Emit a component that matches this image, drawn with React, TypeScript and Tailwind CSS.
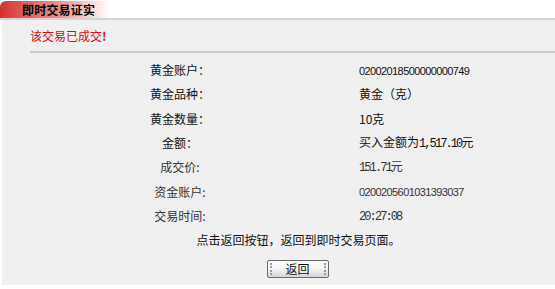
import React from 'react';

const rows: { label: string; value: string; kind: 'cjk' | 'num' | 'mono'; bold?: boolean }[] = [
  { label: '黄金账户：', value: '02002018500000000749', kind: 'num', bold: true },
  { label: '黄金品种：', value: '黄金（克）', kind: 'cjk', bold: true },
  { label: '黄金数量：', value: '10克', kind: 'cjk', bold: true },
  { label: '金额：', value: '买入金额为1,517.10元', kind: 'mono', bold: true },
  { label: '成交价:', value: '151.71元', kind: 'mono' },
  { label: '资金账户:', value: '0200205601031393037', kind: 'num' },
  { label: '交易时间:', value: '20:27:08', kind: 'mono' },
];

const cjk = "font-['Noto_Sans_CJK_SC',sans-serif]";

const Value = ({ text, kind }: { text: string; kind: string }) => {
  if (kind === 'num') {
    return <span className="font-['Liberation_Sans',sans-serif] text-[11px] tracking-[-0.6px]">{text}</span>;
  }
  if (kind === 'mono') {
    // digits narrow like the bitmap font, CJK kept at full width
    const parts = text.split(/([0-9,.:]+)/);
    return (
      <span>
        {parts.map((p, i) =>
          /^[0-9,.:]+$/.test(p) ? (
            <span key={i} className="font-['Liberation_Mono',monospace] text-[12px] tracking-[-1.9px]">{p}</span>
          ) : (
            <span key={i}>{p}</span>
          )
        )}
      </span>
    );
  }
  return <span>{text}</span>;
};

export default function App() {
  return (
    <div className={`w-[555px] h-[289px] bg-white text-[12px] text-[#222] ${cjk} overflow-hidden`}>
      {/* header tab */}
      <div className="h-[20px] pt-[1px] border-b-2 border-[#d4d4d4]">
        <div className="h-[17px] w-[110px] rounded-tl-[6px] bg-gradient-to-r from-[#d3302c] via-[#e88a86] to-white flex items-center pl-[22px]">
          <span className="font-bold text-black text-[12px] leading-none tracking-[0.2px]">即时交易证实</span>
        </div>
      </div>

      <div className="ml-[2px] h-[265px] bg-[#f0f0f0] flex flex-col">
        <div className="ml-[28px] h-[33px] border-b-2 border-[#c8c8c8] flex items-center pt-[1px]">
          <span className="text-[#cc1111] leading-none">该交易已成交<span className="font-bold">!</span></span>
        </div>

        <div className="mt-[5px] flex flex-col">
          {rows.map((r) => (
            <div key={r.label} className="h-[24.3px] flex items-center">
              <div className={`ml-[118px] w-[120px] text-center leading-none ${r.bold ? 'text-[#111]' : 'text-[#333]'}`}>
                {r.label}
              </div>
              <div className={`ml-[119px] leading-none ${r.bold ? 'text-[#111]' : 'text-[#333]'}`}>
                <Value text={r.value} kind={r.kind} />
              </div>
            </div>
          ))}
          <div className="h-[24px] flex items-center justify-center pl-[40px] text-[#111] leading-none">
            点击返回按钮，返回到即时交易页面。
          </div>
          <div className="flex justify-center pl-[38px] mt-[8px]">
            <button className="relative w-[62px] h-[18px] rounded-[2px] border border-[#6a6a6a] bg-gradient-to-b from-white via-[#f4f4f4] to-[#d6d6d6] flex items-center justify-center text-[12px] leading-none text-[#111]">
              <span className="absolute left-[2px] top-[2px] bottom-[2px] border-l-2 border-dotted border-[#9a9a9a]" />
              <span className="absolute right-[2px] top-[2px] bottom-[2px] border-r-2 border-dotted border-[#9a9a9a]" />
              返回
            </button>
          </div>
        </div>
      </div>
    </div>
  );
}
